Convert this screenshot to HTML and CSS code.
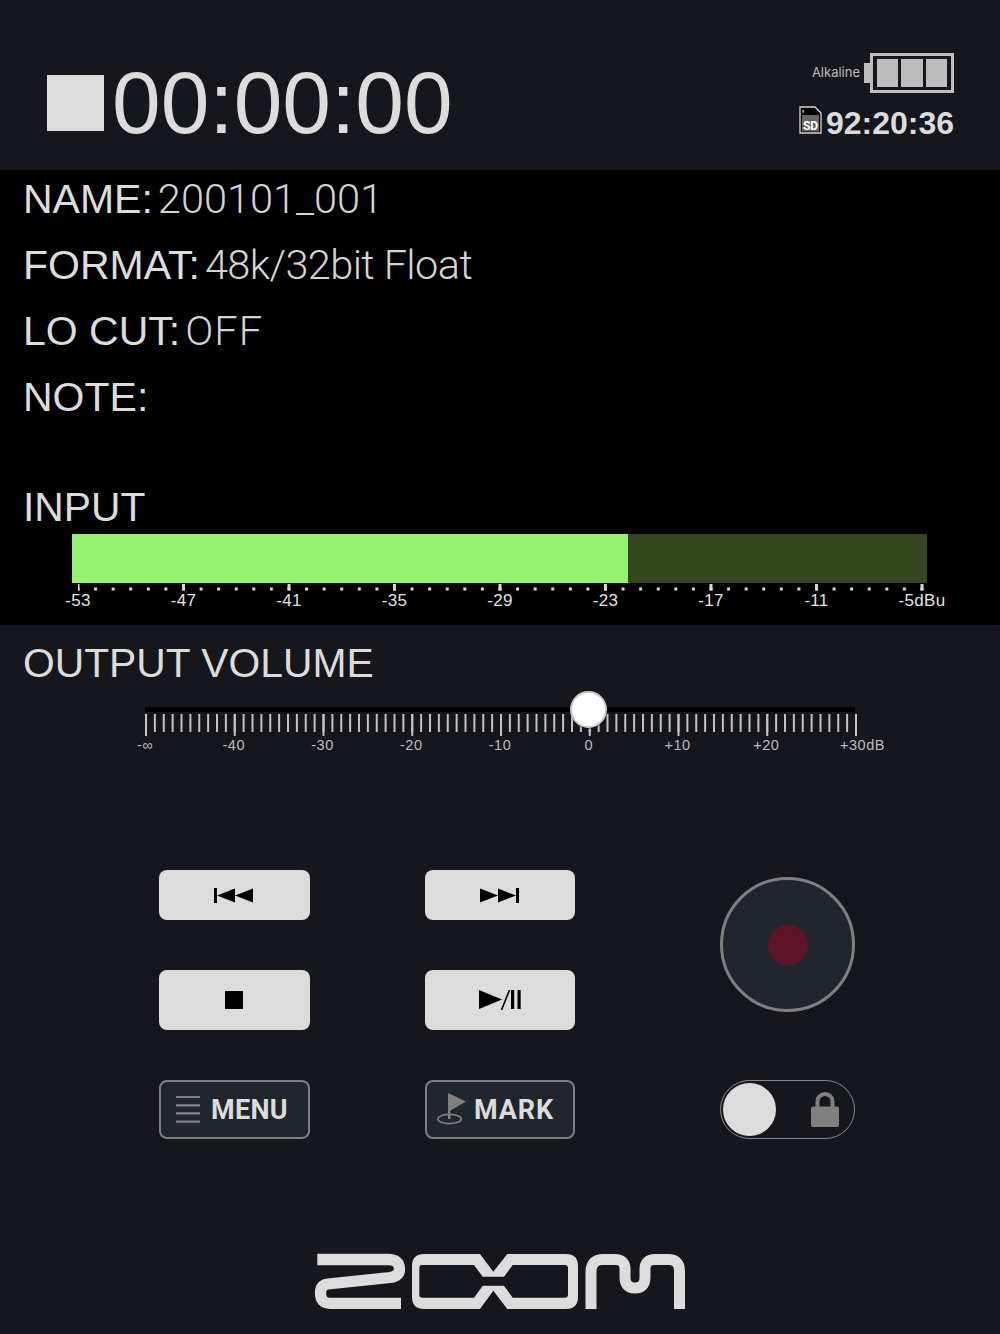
FILE: index.html
```html
<!DOCTYPE html>
<html lang="en">
<head>
<meta charset="utf-8">
<title>Recorder</title>
<link rel="stylesheet" href="styles.css">
</head>
<body>
<div class="page">
  <header class="top">
    <div class="timer">
      <span class="stop-square"></span>
      <span class="timer-text">00:00:00</span>
    </div>
    <div class="status">
      <div class="battery-row">
        <span class="battery-label">Alkaline</span>
        <span class="battery-nub"></span>
        <span class="battery">
          <span class="cell"></span><span class="cell"></span><span class="cell"></span>
        </span>
      </div>
      <div class="remain-row">
        <svg class="sd-icon" width="23" height="28" viewBox="0 0 23 28">
          <path d="M1 1H16L22 7V27H1Z" fill="#000" stroke="#d8d8d8" stroke-width="1.3"/>
          <rect x="3" y="9" width="17" height="16.5" fill="#666"/>
          <rect x="3.4" y="4" width="1.4" height="2.6" fill="#ddd"/>
          <text x="11.5" y="24" text-anchor="middle" class="sd-text">SD</text>
        </svg>
        <span class="remain-time">92:20:36</span>
      </div>
    </div>
  </header>

  <section class="info">
    <div class="info-rows">
      <div class="info-row"><span class="info-key">NAME:</span><span class="info-val">200101_001</span></div>
      <div class="info-row"><span class="info-key">FORMAT:</span><span class="info-val tight">48k/32bit Float</span></div>
      <div class="info-row"><span class="info-key">LO CUT:</span><span class="info-val wide">OFF</span></div>
      <div class="info-row"><span class="info-key">NOTE:</span></div>
    </div>
    <h2 class="section-title input-title">INPUT</h2>
    <div class="meter"><div class="meter-fill"></div></div>
    <div class="meter-scale">
      <svg class="meter-ticks" width="848" height="9" viewBox="0 0 848 9">
        <defs>
          <pattern id="minorTick" width="17.583" height="9" patternUnits="userSpaceOnUse" x="-1.5">
            <rect x="0" y="4.5" width="3" height="3" fill="#d8d8d8"/>
          </pattern>
          <pattern id="majorTick" width="105.5" height="9" patternUnits="userSpaceOnUse" x="-1.5">
            <rect x="0" y="1" width="3" height="6.5" fill="#d8d8d8"/>
          </pattern>
        </defs>
        <rect width="848" height="9" fill="url(#minorTick)"/>
        <rect width="848" height="9" fill="url(#majorTick)"/>
      </svg>
      <div class="meter-labels">
        <span class="tick-label">-53</span><span class="tick-label">-47</span><span class="tick-label">-41</span>
        <span class="tick-label">-35</span><span class="tick-label">-29</span><span class="tick-label">-23</span>
        <span class="tick-label">-17</span><span class="tick-label">-11</span><span class="tick-label">-5dBu</span>
      </div>
    </div>
  </section>

  <section class="output">
    <h2 class="section-title">OUTPUT VOLUME</h2>
    <div class="slider">
      <div class="slider-track"><span class="slider-thumb"></span></div>
      <svg class="slider-ticks" width="712" height="23" viewBox="0 0 712 23">
        <defs>
          <pattern id="volMinor" width="8.875" height="23" patternUnits="userSpaceOnUse">
            <rect x="0" y="0" width="2" height="18" fill="#c4c4c4"/>
          </pattern>
          <pattern id="volMajor" width="88.75" height="23" patternUnits="userSpaceOnUse">
            <rect x="0" y="0" width="2" height="22" fill="#c4c4c4"/>
          </pattern>
        </defs>
        <rect width="712" height="23" fill="url(#volMinor)"/>
        <rect width="712" height="23" fill="url(#volMajor)"/>
      </svg>
      <div class="slider-labels">
        <span class="tick-label">-∞</span><span class="tick-label">-40</span><span class="tick-label">-30</span>
        <span class="tick-label">-20</span><span class="tick-label">-10</span><span class="tick-label">0</span>
        <span class="tick-label">+10</span><span class="tick-label">+20</span><span class="tick-label shifted">+30dB</span>
      </div>
    </div>

    <div class="controls">
      <button class="key">
        <svg class="nudge" width="39" height="15" viewBox="0 0 39 15"><rect width="3" height="15"/><path d="M3 7.5 21 .5V14.5ZM21 7.5 39 .5V14.5Z"/></svg>
      </button>
      <button class="key">
        <svg class="nudge" width="39" height="15" viewBox="0 0 39 15"><rect x="36" width="3" height="15"/><path d="M36 7.5 18 .5V14.5ZM18 7.5 0 .5V14.5Z"/></svg>
      </button>
      <div class="rec-wrap">
        <button class="rec"><span class="rec-dot"></span></button>
      </div>
      <button class="key">
        <svg class="nudge" width="18" height="18" viewBox="0 0 18 18"><rect width="18" height="18"/></svg>
      </button>
      <button class="key">
        <svg width="42" height="20" viewBox="0 0 42 20"><path d="M0 0 23 9.5 0 19Z"/><path d="M22.5 20 30.5 0" stroke="#000" stroke-width="1.6" fill="none"/><rect x="32" width="3.2" height="19"/><rect x="38.5" width="3.2" height="19"/></svg>
      </button>
      <button class="soft menu-btn">
        <svg class="menu-icon" width="24" height="27" viewBox="0 0 24 27"><path d="M0 1H24M0 9.3H24M0 17.3H24M0 25.7H24" stroke="#808080" stroke-width="2.2" fill="none"/></svg>
        <span class="soft-text">MENU</span>
      </button>
      <button class="soft mark-btn">
        <svg class="flag-icon" width="30" height="33" viewBox="0 0 30 33"><path d="M11 0 29 8.5 13.5 17.5V26H11Z" fill="#808080"/><ellipse cx="12.5" cy="26" rx="11.8" ry="4.6" fill="none" stroke="#808080" stroke-width="1.6"/></svg>
        <span class="soft-text mark-text">MARK</span>
      </button>
      <div class="lock-toggle">
        <span class="lock-knob"></span>
        <svg class="lock-icon" width="28" height="35" viewBox="0 0 28 35"><path d="M6.5 16V9.5a7.5 7.5 0 0 1 15 0V16" fill="none" stroke="#808080" stroke-width="4"/><rect y="14.500" width="28" height="20.500" rx="2" fill="#808080"/></svg>
      </div>
    </div>

    <div class="logo">
      <svg width="400" height="80" viewBox="0 0 400 80" aria-label="ZOOM logo">
        <path d="M17.300 19.500H88Q99.500 19.500 99.500 29Q99.500 36 90 37.500L28 44Q20.500 45 20.500 53Q20.500 63.300 30 63.300H101" fill="none" stroke="#dcdcdc" stroke-width="11.300"/>
        <path fill-rule="evenodd" fill="#dcdcdc" d="M124 14H180L193.300 31.700L207.300 14H266Q278 14 278 26V57Q278 69 266 69H207.300L193.300 50.700L180 69H124Q112 69 112 57V26Q112 14 124 14ZM122 25H174L182.700 36.700H204L212.700 25H264.500Q268 25 268 28V54.500Q268 57.700 264.500 57.700H212.700L204 45.700H182.700L174 57.700H122.500Q119.300 57.700 119.300 54.500V28Q119.300 25 122 25Z"/>
        <path d="M291 69V32Q291 19.500 303 19.500H315Q325 19.500 325 29V37Q325 48 335 48Q345 48 345 37V29Q345 19.500 355 19.500H368Q379.500 19.500 379.500 31V69" fill="none" stroke="#dcdcdc" stroke-width="11"/>
      </svg>
    </div>
  </section>
</div>
</body>
</html>
```
FILE: styles.css
```css
* { box-sizing: border-box; }
html, body { margin: 0; padding: 0; background: #15171c; }
.page {
  width: 1000px;
  height: 1334px;
  overflow: hidden;
  font-family: "Liberation Sans", Arial, sans-serif;
  color: #dcdcdc;
  background: #15171c;
}

/* Header */
.top {
  height: 170px;
  display: flex;
  justify-content: space-between;
  padding: 52px 46px 0 47px;
}
.timer { display: flex; align-items: center; height: 102px; }
.stop-square { width: 57px; height: 56px; background: #dcdcdc; margin-right: 8px; }
.timer-text { font-size: 87.500px; line-height: 104px; }
.status { display: flex; flex-direction: column; align-items: flex-end; }
.battery-row { display: flex; align-items: center; height: 41px; }
.battery-label { font-family: Inter, sans-serif; font-size: 13px; color: #bdbdbd; margin-right: 4px; margin-bottom: 1px; }
.battery-nub { width: 6px; height: 20px; background: #bdbdbd; }
.battery {
  width: 84px;
  height: 40px;
  border: 3px solid #bdbdbd;
  padding: 3px 4px;
  display: flex;
  gap: 3px;
  background: #15171c;
}
.cell { flex: 1; background: #bdbdbd; }
.remain-row { display: flex; align-items: flex-start; gap: 4px; margin-top: 13px; }
.sd-icon { display: block; }
.sd-text { font: 700 12px "Roboto", sans-serif; fill: #fff; }
.remain-time { font-size: 32px; font-weight: 700; line-height: 34px; color: #dcdcdc; }

/* Info */
.info { height: 455px; background: #000; padding-left: 23px; }
.info-rows { display: flex; flex-direction: column; gap: 8px; }
.info-row { display: flex; gap: 5px; height: 58px; line-height: 58px; font-size: 41px; }
.info-val { font-family: Roboto, sans-serif; font-weight: 300; font-size: 41.500px; line-height: 58px; color: #d4d4d4; }
.tight { letter-spacing: -.6px; }
.wide { letter-spacing: 1px; }
.section-title { margin: 0; font-size: 40.800px; font-weight: 400; line-height: 44px; }
.input-title { margin-top: 59px; }
.meter {
  margin: 5px 0 0 49px;
  width: 855px;
  height: 49px;
  background: #35451f;
}
.meter-fill { width: 65%; height: 100%; background: #98f271; }
.meter-scale { margin-left: 55px; width: 844px; }
.meter-ticks { display: block; }
.meter-labels {
  display: flex;
  justify-content: space-between;
  font-size: 17px;
  line-height: 18px;
  letter-spacing: .3px;
  color: #e2e2e2;
}
.tick-label { width: 0; display: flex; justify-content: center; white-space: nowrap; }

/* Output */
.output { padding-top: 16px; }
.output > .section-title { padding-left: 23px; }
.slider { margin: 22px 0 0 145px; width: 710px; }
.slider-track { height: 5px; background: #000; position: relative; }
.slider-thumb {
  position: absolute;
  left: 62.400%;
  top: 50%;
  width: 37px;
  height: 37px;
  margin: -18.500px 0 0 -18.500px;
  border-radius: 50%;
  background: #fff;
  border: 2px solid #c8c8c8;
  box-shadow: 0 1px 1px rgba(0, 0, 0, .5);
}
.slider-ticks { display: block; margin-top: 2px; }
.slider-labels {
  display: flex;
  justify-content: space-between;
  font-size: 14.500px;
  line-height: 16px;
  letter-spacing: .5px;
  color: #bdbdbd;
}
.shifted { transform: translateX(7.500px); }

/* Controls */
.controls {
  display: grid;
  grid-template-columns: 151px 150px 165px;
  grid-template-rows: 50px 60px 59px;
  column-gap: 115px;
  row-gap: 50px;
  margin: 117px 0 0 159px;
}
.key {
  border: 0;
  padding: 0;
  border-radius: 8px;
  background: #dcdcdc;
  display: flex;
  align-items: center;
  justify-content: center;
}
.key svg { display: block; fill: #000; }
.key .nudge { margin-right: 2px; }
.rec-wrap { grid-column: 3; grid-row: 1 / span 2; justify-self: end; padding-top: 7px; }
.rec {
  width: 135px;
  height: 135px;
  padding: 0;
  border-radius: 50%;
  border: 3px solid #7f7f7f;
  background: #20262c;
  display: flex;
  align-items: center;
  justify-content: center;
}
.rec-dot { width: 40px; height: 40px; border-radius: 50%; background: #5e1429; }
.soft {
  padding: 0;
  border: 2px solid #7f7f7f;
  border-radius: 8px;
  background: #20262c;
  display: flex;
  align-items: center;
  justify-content: center;
  font-family: Roboto, sans-serif;
  color: #dcdcdc;
}
.menu-btn { gap: 11px; padding-right: 5px; }
.mark-btn { gap: 7px; padding-right: 8px; }
.soft svg { display: block; flex: none; }
.flag-icon { margin-left: -1px; }
.soft-text { font-size: 27px; font-weight: 700; letter-spacing: .3px; line-height: 30px; }
.mark-text { letter-spacing: .9px; }
.lock-toggle {
  justify-self: end;
  width: 135px;
  height: 59px;
  border: 1.500px solid #8a8a8a;
  border-radius: 30px;
  padding: 0 15px 0 2px;
  display: flex;
  align-items: center;
  justify-content: space-between;
}
.lock-knob { width: 53px; height: 53px; border-radius: 50%; background: #dcdcdc; }
.lock-icon { display: block; }

/* Logo */
.logo { display: flex; justify-content: center; margin-top: 101px; }
.logo svg { display: block; }
```
